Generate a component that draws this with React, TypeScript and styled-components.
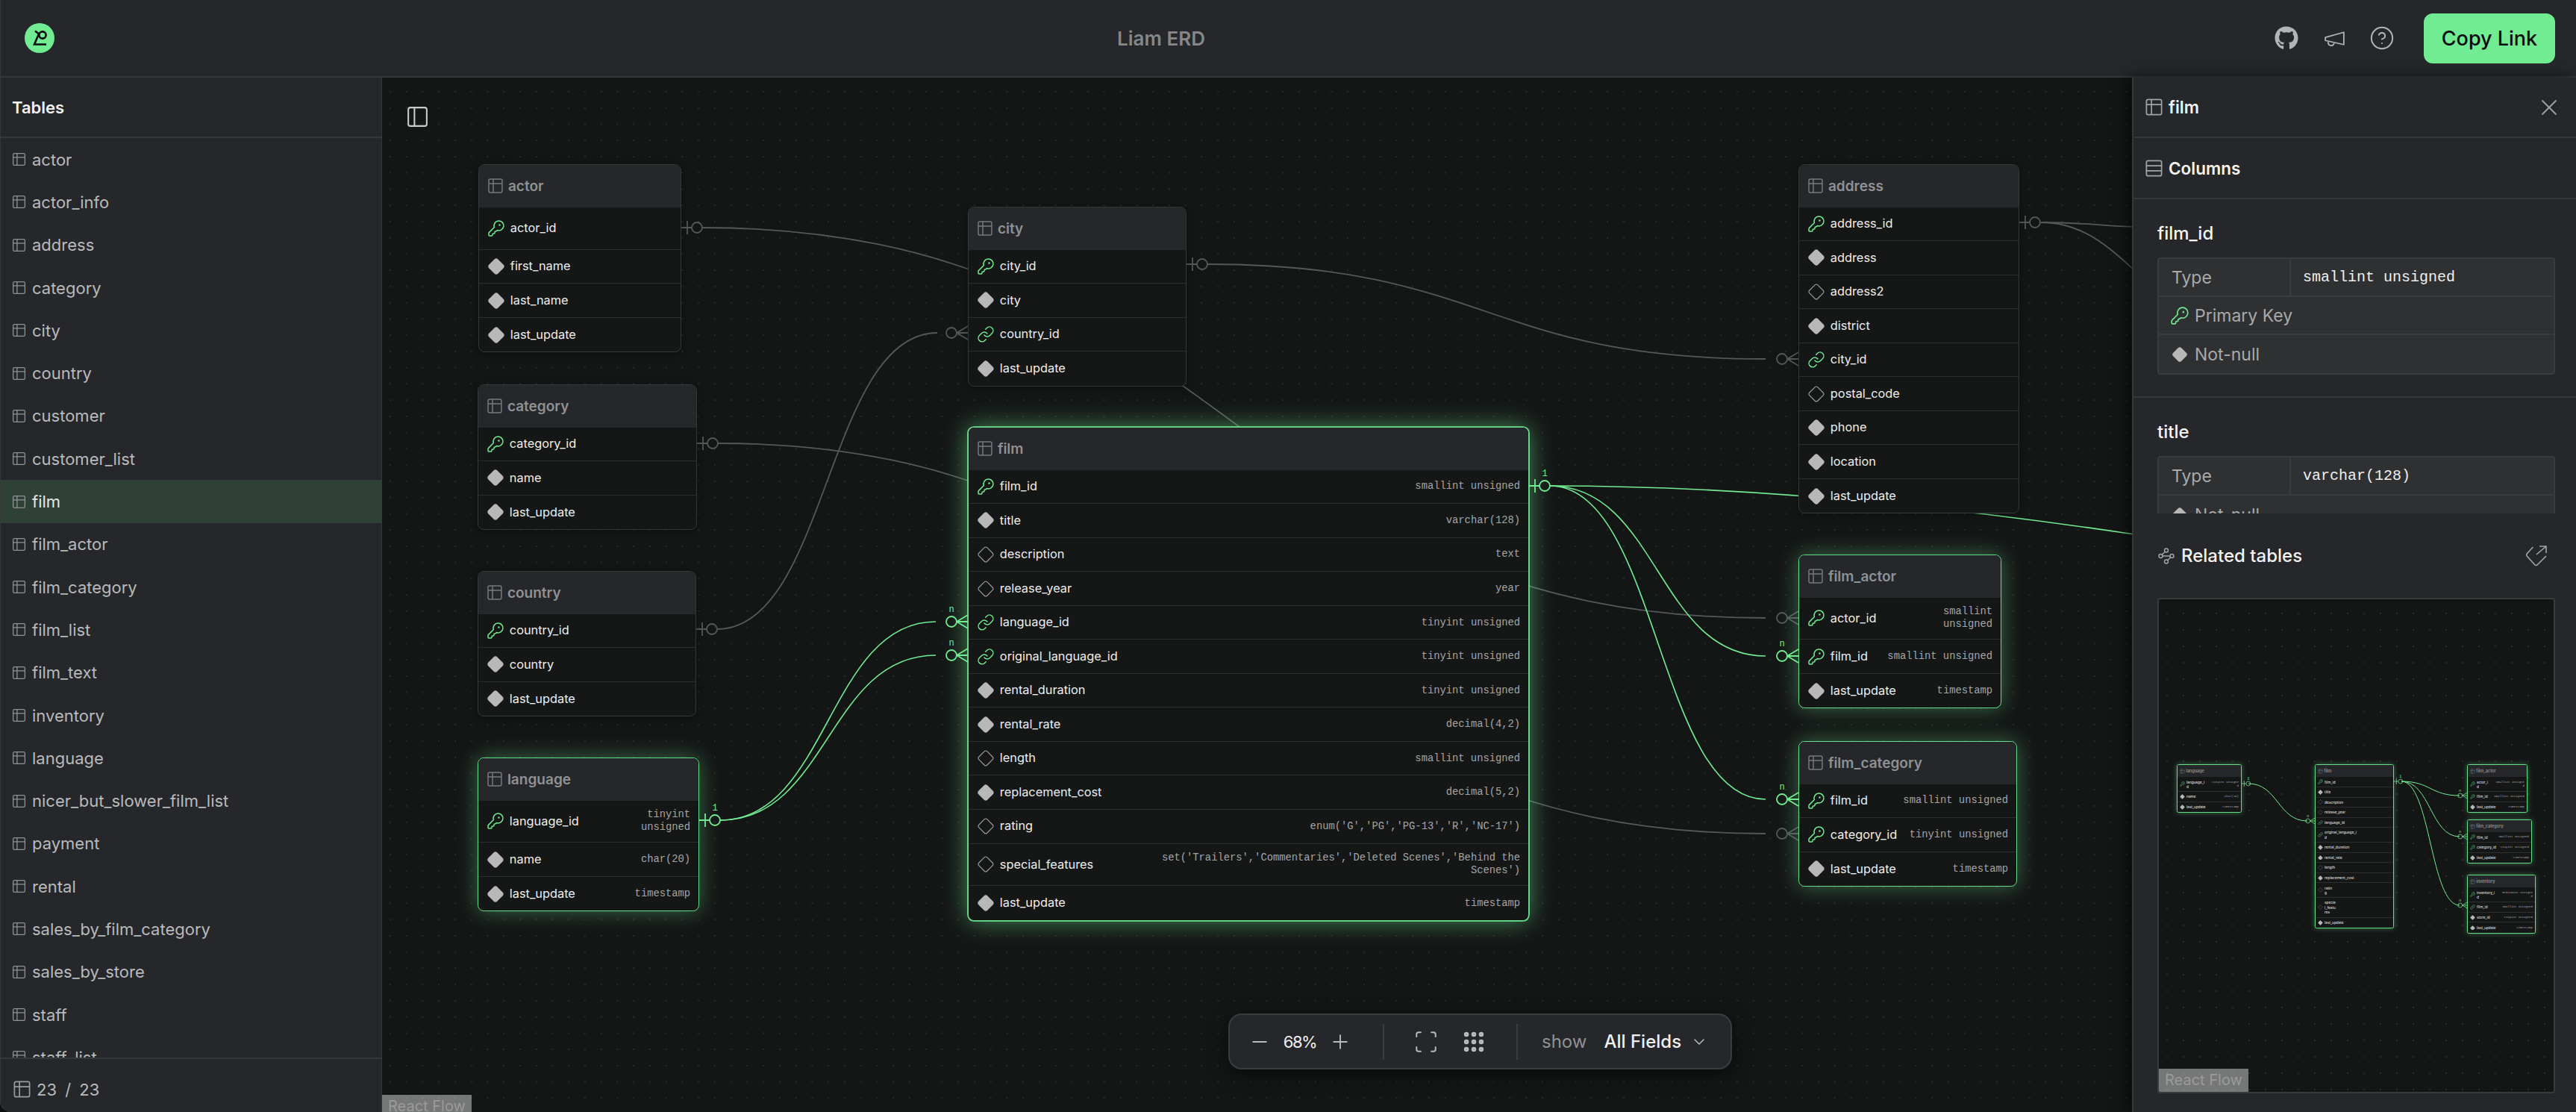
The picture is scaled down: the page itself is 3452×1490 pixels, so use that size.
import React from 'react';
import styled, { createGlobalStyle } from 'styled-components';
import {
  ChevronDown,
  CircleHelp,
  Diamond,
  Grip,
  KeyRound,
  Link as LinkIcon,
  Minus,
  PanelLeft,
  Plus,
  Rows3,
  Scan,
  Table2,
  Waypoints,
  X,
} from 'lucide-react';
import { FaGithub } from 'react-icons/fa';

const GREEN = '#72ec92';
const GREY_EDGE = '#55585a';
const SANS = "Inter, 'Liberation Sans', sans-serif";
const MONO = "'Liberation Mono', 'DejaVu Sans Mono', monospace";

const Global = createGlobalStyle`
  html, body {
    margin: 0;
    padding: 0;
    background: #0e0f0f;
  }
  * {
    box-sizing: border-box;
  }
`;

const Page = styled.div`
  width: 3452px;
  height: 1490px;
  display: flex;
  flex-direction: column;
  overflow: hidden;
  font-family: ${SANS};
  color: #e8e8e8;
`;

const TopBar = styled.header`
  height: 104px;
  flex: none;
  display: flex;
  align-items: center;
  justify-content: space-between;
  padding: 0 28px 0 32px;
  background: #25272a;
  border-bottom: 2px solid #36383a;
  border-left: 1px solid #36383a;
`;

const LogoMark = styled.svg`
  width: 40px;
  height: 40px;
`;

const AppTitle = styled.div`
  position: absolute;
  left: 0;
  right: 0;
  text-align: center;
  pointer-events: none;
  font-size: 26px;
  font-weight: 600;
  color: #85878a;
  padding-right: 340px;
`;

const TopActions = styled.div`
  display: flex;
  align-items: center;
  color: #b2b4b6;
`;

const TopIcon = styled.span<{ $w: number }>`
  width: ${(p) => p.$w}px;
  display: flex;
  justify-content: center;
`;

const CopyButton = styled.button`
  width: 176px;
  height: 67px;
  margin-left: 24px;
  border: 0;
  border-radius: 12px;
  background: ${GREEN};
  color: #0b0c0c;
  font-family: ${SANS};
  font-size: 27px;
  font-weight: 500;
`;

const Body = styled.div`
  flex: 1;
  min-height: 0;
  display: grid;
  grid-template-columns: 512px 1fr 595px;
`;

const Sidebar = styled.aside`
  display: flex;
  flex-direction: column;
  min-height: 0;
  background: #25272a;
  border-left: 1px solid #36383a;
  border-right: 1px solid #36383a;
  border-bottom-left-radius: 14px;
`;

const SidebarHead = styled.div`
  height: 81px;
  flex: none;
  display: flex;
  align-items: center;
  padding-left: 15px;
  font-size: 22px;
  font-weight: 600;
  color: #f2f2f2;
  border-bottom: 2px solid #36383a;
`;

const TableList = styled.ul`
  flex: 1;
  min-height: 0;
  margin: 0;
  padding: 0;
  list-style: none;
  overflow: hidden;
`;

const TableItem = styled.li<{ $on?: boolean }>`
  height: 57.3px;
  display: flex;
  align-items: center;
  gap: 7px;
  padding-left: 14px;
  font-size: 22px;
  color: ${(p) => (p.$on ? '#e4e6e6' : '#b8babc')};
  background: ${(p) => (p.$on ? '#2f4136' : 'transparent')};
  svg {
    color: #8f9193;
  }
`;

const SidebarFoot = styled.div`
  height: 73px;
  flex: none;
  display: flex;
  align-items: center;
  gap: 6px;
  padding: 10px 0 0 15px;
  border-top: 2px solid #36383a;
  font-size: 22px;
  color: #b8babc;
  word-spacing: 5px;
  svg {
    color: #9a9c9e;
  }
`;

const Canvas = styled.main`
  position: relative;
  min-width: 0;
  overflow: hidden;
  background-color: #141616;
  background-image: radial-gradient(circle, #2a2c2c 1px, transparent 1.2px);
  background-size: 21.76px 21.76px;
  background-position: 0 8px;
`;

const PanelToggle = styled.button`
  position: absolute;
  left: 31px;
  top: 36px;
  z-index: 3;
  padding: 0;
  border: 0;
  display: flex;
  background: transparent;
  color: #c9cbcd;
`;

const FlowPane = styled.div<{ $k: number }>`
  --k: ${(p) => p.$k};
  position: absolute;
  inset: 0;
`;

const EdgeLayer = styled.svg`
  position: absolute;
  left: 0;
  top: 0;
  width: 100%;
  height: 100%;
`;

const NodeCard = styled.div<{ $x: number; $y: number; $w: number; $tone: Tone }>`
  position: absolute;
  left: ${(p) => p.$x}px;
  top: ${(p) => p.$y}px;
  width: ${(p) => p.$w}px;
  background: #151717;
  border: calc(var(--k) * 1.47px) solid
    ${(p) => (p.$tone === 'idle' ? '#36383a' : '#66dd88')};
  border-radius: calc(var(--k) * 6px);
  overflow: hidden;
  box-shadow: ${(p) =>
    p.$tone === 'idle'
      ? '0 2px 8px rgba(0, 0, 0, 0.35)'
      : p.$tone === 'related'
      ? '0 0 calc(var(--k) * 20px) rgba(114, 236, 146, 0.4)'
      : `0 0 0 calc(var(--k) * 0.6px) ${GREEN}, 0 0 calc(var(--k) * 24px) rgba(114, 236, 146, 0.55)`};
`;

const NodeHead = styled.div`
  height: calc(var(--k) * 41.6px);
  display: flex;
  align-items: center;
  gap: calc(var(--k) * 4px);
  padding-left: calc(var(--k) * 7px);
  background: #25272a;
  color: #8f9193;
  font-size: calc(var(--k) * 14px);
  font-weight: 600;
  svg {
    width: calc(var(--k) * 17.6px);
    height: calc(var(--k) * 17.6px);
    color: #77797c;
    stroke-width: 1.5px;
  }
`;

const FieldRow = styled.div<{ $tall?: boolean }>`
  min-height: calc(var(--k) * ${(p) => (p.$tall ? 42 : 33.5)}px);
  padding: calc(var(--k) * 8px);
  display: flex;
  align-items: center;
  justify-content: space-between;
  gap: calc(var(--k) * 12px);
  border-bottom: 1px solid #2b2d2f;
  &:last-child {
    border-bottom: 0;
  }
`;

const FieldName = styled.div`
  display: flex;
  align-items: center;
  gap: calc(var(--k) * 5.2px);
  font-size: calc(var(--k) * 12px);
  line-height: calc(var(--k) * 16px);
  color: #eeeeee;
  white-space: pre;
  svg {
    flex: none;
    width: calc(var(--k) * 17.6px);
    height: calc(var(--k) * 17.6px);
    margin: calc(var(--k) * -1px) 0;
  }
`;

const FieldType = styled.div`
  font-family: ${MONO};
  font-size: calc(var(--k) * 10.15px);
  line-height: calc(var(--k) * 12.5px);
  color: #a3a5a7;
  text-align: right;
  white-space: pre;
`;

const Toolbar = styled.div`
  position: absolute;
  left: 1134px;
  bottom: 57px;
  height: 75px;
  z-index: 4;
  display: flex;
  align-items: center;
  padding: 0 30px 0 20px;
  background: #25272a;
  border: 2px solid #3a3c3e;
  border-radius: 18px;
  box-shadow: 0 6px 24px rgba(0, 0, 0, 0.55);
  color: #b9bbbd;
`;

const ToolButton = styled.span<{ $after?: number }>`
  width: 40px;
  display: flex;
  justify-content: center;
  margin-right: ${(p) => p.$after ?? 0}px;
`;

const ZoomValue = styled.span`
  width: 68px;
  text-align: center;
  font-size: 22px;
  letter-spacing: -1.5px;
  color: #eeeeee;
`;

const ToolDivider = styled.span<{ $after: number }>`
  width: 2px;
  height: 48px;
  margin: 0 ${(p) => p.$after}px 0 37px;
  background: #3a3c3e;
`;

const ShowLabel = styled.span`
  font-size: 24px;
  color: #8f9193;
  margin-right: 23px;
`;

const ShowValue = styled.span`
  font-size: 24px;
  font-weight: 500;
  color: #f0f0f0;
  margin-right: 12px;
`;

const Attribution = styled.div`
  position: absolute;
  left: 0;
  bottom: 0;
  z-index: 3;
  padding: 4px 8px;
  background: rgba(255, 255, 255, 0.42);
  color: #9a9b9b;
  font-size: 20px;
  line-height: 23px;
`;

const FlowAttribution = styled(Attribution)`
  bottom: -8px;
`;

const Drawer = styled.aside`
  position: relative;
  z-index: 5;
  display: flex;
  flex-direction: column;
  min-height: 0;
  background: #25272a;
  border-left: 2px solid #36383a;
  box-shadow: -6px 0 18px rgba(0, 0, 0, 0.6);
`;

const DrawerRow = styled.div<{ $h: number }>`
  height: ${(p) => p.$h}px;
  flex: none;
  display: flex;
  align-items: center;
  gap: 6px;
  padding: 0 18px 0 14px;
  border-bottom: 2px solid #36383a;
  font-size: 22.5px;
  font-weight: 600;
  color: #f2f2f2;
  svg {
    color: #a2a4a6;
  }
`;

const CloseIcon = styled.span`
  margin-left: auto;
  display: flex;
`;

const ColumnsScroll = styled.div`
  height: 421px;
  flex: none;
  overflow: hidden;
`;

const ColumnBlock = styled.section`
  height: 266px;
  padding: 31px 28px 0 32px;
  border-bottom: 2px solid #36383a;
`;

const ColumnTitle = styled.h3`
  margin: 0 0 17px 0;
  height: 30px;
  line-height: 30px;
  font-size: 24px;
  font-weight: 500;
  color: #f4f4f4;
`;

const PropTable = styled.div`
  border: 2px solid #393b3d;
  border-radius: 4px;
  background: #2e3032;
`;

const PropRow = styled.div`
  height: 51px;
  display: flex;
  align-items: center;
  gap: 7px;
  border-bottom: 2px solid #393b3d;
  font-size: 23px;
  color: #a8aaac;
  padding-left: 15px;
  &:last-child {
    border-bottom: 0;
  }
`;

const PropIcon = styled.span`
  width: 26px;
  display: flex;
  justify-content: center;
`;

const PropLabel = styled.div`
  width: 162px;
  height: 100%;
  display: flex;
  align-items: center;
  padding-left: 2px;
  border-right: 2px solid #393b3d;
  margin-right: 9px;
`;

const PropValue = styled.div`
  font-family: ${MONO};
  font-size: 20px;
  color: #eeeeee;
`;

const Related = styled.section`
  flex: 1;
  min-height: 0;
  display: flex;
  flex-direction: column;
  padding: 0 28px 25px 32px;
`;

const RelatedHead = styled.div`
  height: 113px;
  flex: none;
  display: flex;
  align-items: center;
  gap: 8px;
  font-size: 24px;
  font-weight: 500;
  color: #f2f2f2;
  svg {
    color: #a2a4a6;
  }
`;

const ExpandIcon = styled.svg`
  width: 28px;
  height: 28px;
  margin-left: auto;
  margin-right: 11px;
  color: #a2a4a6;
`;

const Preview = styled.div`
  flex: 1;
  position: relative;
  overflow: hidden;
  border: 2px solid #393b3d;
  border-radius: 4px;
  background-color: #141616;
  background-image: radial-gradient(circle, #2a2c2c 1px, transparent 1.2px);
  background-size: 22px 22px;
  background-position: 0 8px;
`;

type Tone = 'idle' | 'related' | 'selected';
type Kind = 'pk' | 'fk' | 'req' | 'opt';
type Field = { name: string; kind: Kind; type?: string; tall?: boolean };
type TableNode = {
  name: string;
  x: number;
  y: number;
  w: number;
  tone: Tone;
  fields: Field[];
};

const FieldIcon = ({ kind }: { kind: Kind }) => {
  if (kind === 'pk') return <KeyRound color={GREEN} strokeWidth={1.5} />;
  if (kind === 'fk') return <LinkIcon color={GREEN} strokeWidth={1.5} />;
  if (kind === 'req') return <Diamond color="#b8b8b8" fill="#b8b8b8" strokeWidth={1.5} />;
  return <Diamond color="#9a9a9a" strokeWidth={1.2} />;
};

const Node = ({ node, ox, oy }: { node: TableNode; ox: number; oy: number }) => (
  <NodeCard $x={node.x - ox} $y={node.y - oy} $w={node.w} $tone={node.tone}>
    <NodeHead>
      <Table2 />
      {node.name}
    </NodeHead>
    {node.fields.map((f) => (
      <FieldRow key={f.name} $tall={f.tall}>
        <FieldName>
          <FieldIcon kind={f.kind} />
          {f.name}
        </FieldName>
        {f.type && <FieldType>{f.type}</FieldType>}
      </FieldRow>
    ))}
  </NodeCard>
);

const curve = (x1: number, y1: number, x2: number, y2: number) => {
  const mx = (x1 + x2) / 2;
  return `M${x1} ${y1} C${mx} ${y1} ${mx} ${y2} ${x2} ${y2}`;
};

// "one" end of a relation: tick and ring right of the source table
const OneEnd = ({ x, y, on, s = 1 }: { x: number; y: number; on?: boolean; s?: number }) => {
  const c = on ? GREEN : GREY_EDGE;
  return (
    <g stroke={c} fill="none" strokeWidth={1.8 * s}>
      <path d={`M${x} ${y}H${x + 14 * s}M${x + 8 * s} ${y - 9 * s}V${y + 9 * s}`} />
      <circle cx={x + 21 * s} cy={y} r={7 * s} />
      {on && (
        <text x={x + 21 * s} y={y - 13 * s} fill={c} stroke="none" fontSize={12 * s} fontFamily={MONO} textAnchor="middle">
          1
        </text>
      )}
    </g>
  );
};

// "many" end: ring and crow's foot left of the target table
const ManyEnd = ({ x, y, on, s = 1 }: { x: number; y: number; on?: boolean; s?: number }) => {
  const c = on ? GREEN : GREY_EDGE;
  return (
    <g stroke={c} fill="none" strokeWidth={1.8 * s}>
      <circle cx={x - 22 * s} cy={y} r={7 * s} />
      <path d={`M${x - 15 * s} ${y}H${x}M${x - 15 * s} ${y}L${x} ${y - 9 * s}M${x - 15 * s} ${y}L${x} ${y + 9 * s}`} />
      {on && (
        <text x={x - 22 * s} y={y - 13 * s} fill={c} stroke="none" fontSize={12 * s} fontFamily={MONO} textAnchor="middle">
          n
        </text>
      )}
    </g>
  );
};

const tables: TableNode[] = [
  {
    name: 'actor', x: 641, y: 220, w: 272, tone: 'idle',
    fields: [
      { name: 'actor_id', kind: 'pk', tall: true },
      { name: 'first_name', kind: 'req' },
      { name: 'last_name', kind: 'req' },
      { name: 'last_update', kind: 'req' },
    ],
  },
  {
    name: 'category', x: 640, y: 515, w: 294, tone: 'idle',
    fields: [
      { name: 'category_id', kind: 'pk' },
      { name: 'name', kind: 'req' },
      { name: 'last_update', kind: 'req' },
    ],
  },
  {
    name: 'country', x: 640, y: 765, w: 293, tone: 'idle',
    fields: [
      { name: 'country_id', kind: 'pk' },
      { name: 'country', kind: 'req' },
      { name: 'last_update', kind: 'req' },
    ],
  },
  {
    name: 'language', x: 640, y: 1015, w: 297, tone: 'related',
    fields: [
      { name: 'language_id', kind: 'pk', type: 'tinyint\nunsigned' },
      { name: 'name', kind: 'req', type: 'char(20)' },
      { name: 'last_update', kind: 'req', type: 'timestamp' },
    ],
  },
  {
    name: 'city', x: 1297, y: 277, w: 293, tone: 'idle',
    fields: [
      { name: 'city_id', kind: 'pk' },
      { name: 'city', kind: 'req' },
      { name: 'country_id', kind: 'fk' },
      { name: 'last_update', kind: 'req' },
    ],
  },
  {
    name: 'film', x: 1297, y: 572, w: 752, tone: 'selected',
    fields: [
      { name: 'film_id', kind: 'pk', type: 'smallint unsigned' },
      { name: 'title', kind: 'req', type: 'varchar(128)' },
      { name: 'description', kind: 'opt', type: 'text' },
      { name: 'release_year', kind: 'opt', type: 'year' },
      { name: 'language_id', kind: 'fk', type: 'tinyint unsigned' },
      { name: 'original_language_id', kind: 'fk', type: 'tinyint unsigned' },
      { name: 'rental_duration', kind: 'req', type: 'tinyint unsigned' },
      { name: 'rental_rate', kind: 'req', type: 'decimal(4,2)' },
      { name: 'length', kind: 'opt', type: 'smallint unsigned' },
      { name: 'replacement_cost', kind: 'req', type: 'decimal(5,2)' },
      { name: 'rating', kind: 'opt', type: "enum('G','PG','PG-13','R','NC-17')" },
      {
        name: 'special_features',
        kind: 'opt',
        type: "set('Trailers','Commentaries','Deleted Scenes','Behind the\nScenes')",
      },
      { name: 'last_update', kind: 'req', type: 'timestamp' },
    ],
  },
  {
    name: 'address', x: 2410, y: 220, w: 296, tone: 'idle',
    fields: [
      { name: 'address_id', kind: 'pk' },
      { name: 'address', kind: 'req' },
      { name: 'address2', kind: 'opt' },
      { name: 'district', kind: 'req' },
      { name: 'city_id', kind: 'fk' },
      { name: 'postal_code', kind: 'opt' },
      { name: 'phone', kind: 'req' },
      { name: 'location', kind: 'req' },
      { name: 'last_update', kind: 'req' },
    ],
  },
  {
    name: 'film_actor', x: 2410, y: 743, w: 272, tone: 'related',
    fields: [
      { name: 'actor_id', kind: 'pk', type: 'smallint\nunsigned' },
      { name: 'film_id', kind: 'pk', type: 'smallint unsigned' },
      { name: 'last_update', kind: 'req', type: 'timestamp' },
    ],
  },
  {
    name: 'film_category', x: 2410, y: 993, w: 293, tone: 'related',
    fields: [
      { name: 'film_id', kind: 'pk', type: 'smallint unsigned' },
      { name: 'category_id', kind: 'pk', type: 'tinyint unsigned' },
      { name: 'last_update', kind: 'req', type: 'timestamp' },
    ],
  },
];

const previewTables: TableNode[] = [
  {
    name: 'language', x: 2917, y: 1024, w: 87, tone: 'related',
    fields: [
      { name: 'language_i\nd', kind: 'pk', type: 'tinyint unsigne\nd' },
      { name: 'name', kind: 'req', type: 'char(20)' },
      { name: 'last_update', kind: 'req', type: 'timestamp' },
    ],
  },
  {
    name: 'film', x: 3102, y: 1024, w: 106, tone: 'related',
    fields: [
      { name: 'film_id', kind: 'pk' },
      { name: 'title', kind: 'req' },
      { name: 'description', kind: 'opt' },
      { name: 'release_year', kind: 'opt' },
      { name: 'language_id', kind: 'fk' },
      { name: 'original_language_i\nd', kind: 'fk' },
      { name: 'rental_duration', kind: 'req' },
      { name: 'rental_rate', kind: 'req' },
      { name: 'length', kind: 'opt' },
      { name: 'replacement_cost', kind: 'req' },
      { name: 'ratin\ng', kind: 'opt' },
      { name: 'specia\nl_featu\nres', kind: 'opt' },
      { name: 'last_update', kind: 'req' },
    ],
  },
  {
    name: 'film_actor', x: 3306, y: 1024, w: 81, tone: 'related',
    fields: [
      { name: 'actor_i\nd', kind: 'pk', type: 'smallint unsigne\nd' },
      { name: 'film_id', kind: 'pk', type: 'smallint unsigned' },
      { name: 'last_update', kind: 'req', type: 'timestamp' },
    ],
  },
  {
    name: 'film_category', x: 3306, y: 1098, w: 87, tone: 'related',
    fields: [
      { name: 'film_id', kind: 'pk', type: 'smallint unsigned' },
      { name: 'category_id', kind: 'pk', type: 'tinyint unsigned' },
      { name: 'last_update', kind: 'req', type: 'timestamp' },
    ],
  },
  {
    name: 'inventory', x: 3306, y: 1172, w: 92, tone: 'related',
    fields: [
      { name: 'inventory_i\nd', kind: 'pk', type: 'mediumint unsigne\nd' },
      { name: 'film_id', kind: 'fk', type: 'smallint unsigned' },
      { name: 'store_id', kind: 'req', type: 'tinyint unsigned' },
      { name: 'last_update', kind: 'req', type: 'timestamp' },
    ],
  },
];

const sidebarNames = [
  'actor', 'actor_info', 'address', 'category', 'city', 'country', 'customer',
  'customer_list', 'film', 'film_actor', 'film_category', 'film_list', 'film_text',
  'inventory', 'language', 'nicer_but_slower_film_list', 'payment', 'rental',
  'sales_by_film_category', 'sales_by_store', 'staff', 'staff_list',
];

const MainFlow = () => (
  <FlowPane $k={1.36}>
    <EdgeLayer viewBox="512 104 2345 1386">
      <g fill="none" stroke={GREY_EDGE} strokeWidth={1.8}>
        <path d={curve(941, 305, 2366, 828)} />
        <path d={curve(962, 594, 2366, 1117)} />
        <path d={curve(961, 843, 1256, 446)} />
        <path d={curve(1617, 354, 2366, 481)} />
        <path d="M2735 298 C2790 298 2810 302 2860 304" />
        <path d="M2735 298 C2790 298 2825 330 2860 362" />
      </g>
      <g fill="none" stroke={GREEN} strokeWidth={1.6}>
        <path d={curve(965, 1099, 1254, 833)} />
        <path d={curve(965, 1099, 1254, 878)} />
        <path d={curve(2077, 651, 2366, 879)} />
        <path d={curve(2077, 651, 2366, 1071)} />
        <path d="M2077 651 C2250 651 2500 662 2860 716" />
      </g>
      <OneEnd x={913} y={305} />
      <OneEnd x={934} y={594} />
      <OneEnd x={933} y={843} />
      <OneEnd x={1590} y={354} />
      <OneEnd x={2706} y={298} />
      <ManyEnd x={1297} y={446} />
      <ManyEnd x={2410} y={481} />
      <ManyEnd x={2410} y={828} />
      <ManyEnd x={2410} y={1117} />
      <OneEnd x={937} y={1099} on />
      <OneEnd x={2049} y={651} on />
      <ManyEnd x={1297} y={833} on />
      <ManyEnd x={1297} y={878} on />
      <ManyEnd x={2410} y={879} on />
      <ManyEnd x={2410} y={1071} on />
    </EdgeLayer>
    {tables.map((t) => (
      <Node key={t.name} node={t} ox={512} oy={104} />
    ))}
  </FlowPane>
);

const RelatedFlow = () => (
  <FlowPane $k={0.394}>
    <EdgeLayer viewBox="2893 803 529 660">
      <g fill="none" stroke={GREEN} strokeWidth={1}>
        <path d={curve(3013, 1050, 3092, 1100)} />
        <path d={curve(3218, 1047, 3296, 1066)} />
        <path d={curve(3218, 1047, 3296, 1121)} />
        <path d={curve(3218, 1047, 3296, 1213)} />
      </g>
      <OneEnd x={3004} y={1050} on s={0.42} />
      <OneEnd x={3208} y={1047} on s={0.42} />
      <ManyEnd x={3102} y={1100} on s={0.42} />
      <ManyEnd x={3306} y={1066} on s={0.42} />
      <ManyEnd x={3306} y={1121} on s={0.42} />
      <ManyEnd x={3306} y={1213} on s={0.42} />
    </EdgeLayer>
    {previewTables.map((t) => (
      <Node key={t.name} node={t} ox={2893} oy={803} />
    ))}
  </FlowPane>
);

export default function App() {
  return (
    <Page>
      <Global />
      <TopBar>
        <LogoMark viewBox="0 0 40 40">
          <circle cx="20" cy="20" r="20" fill={GREEN} />
          <g fill="none" stroke="#0b0c0c" strokeWidth="2.6">
            <path d="M14 10.5 L19 14.5 L13 28.5 H29" />
            <circle cx="24" cy="16" r="4.6" />
          </g>
        </LogoMark>
        <AppTitle>Liam ERD</AppTitle>
        <TopActions>
          <TopIcon $w={64}>
            <FaGithub size={32} />
          </TopIcon>
          <TopIcon $w={64}>
            <svg width="33" height="33" viewBox="0 0 24 24" fill="none" stroke="currentColor" strokeWidth="1.3" strokeLinejoin="round">
              <path d="m3 11 18-5v12L3 14v-3z" />
              <path d="M11.6 16.8a3 3 0 1 1-5.8-1.6" />
            </svg>
          </TopIcon>
          <TopIcon $w={64}>
            <CircleHelp size={34} strokeWidth={1.4} />
          </TopIcon>
          <CopyButton>Copy Link</CopyButton>
        </TopActions>
      </TopBar>
      <Body>
        <Sidebar>
          <SidebarHead>Tables</SidebarHead>
          <TableList>
            {sidebarNames.map((name) => (
              <TableItem key={name} $on={name === 'film'}>
                <Table2 size={21} strokeWidth={1.5} />
                {name}
              </TableItem>
            ))}
          </TableList>
          <SidebarFoot>
            <Table2 size={27} strokeWidth={1.5} />
            23 / 23
          </SidebarFoot>
        </Sidebar>
        <Canvas>
          <PanelToggle aria-label="Toggle sidebar">
            <PanelLeft size={33} strokeWidth={1.5} />
          </PanelToggle>
          <MainFlow />
          <Toolbar>
            <ToolButton>
              <Minus size={30} strokeWidth={1.5} />
            </ToolButton>
            <ZoomValue>68%</ZoomValue>
            <ToolButton>
              <Plus size={30} strokeWidth={1.5} />
            </ToolButton>
            <ToolDivider $after={36} />
            <ToolButton $after={24}>
              <Scan size={34} strokeWidth={1.4} />
            </ToolButton>
            <ToolButton>
              <Grip size={34} strokeWidth={2.6} />
            </ToolButton>
            <ToolDivider $after={32} />
            <ShowLabel>show</ShowLabel>
            <ShowValue>All Fields</ShowValue>
            <ChevronDown size={24} strokeWidth={1.5} />
          </Toolbar>
          <FlowAttribution>React Flow</FlowAttribution>
        </Canvas>
        <Drawer>
          <DrawerRow $h={81}>
            <Table2 size={27} strokeWidth={1.5} />
            film
            <CloseIcon>
              <X size={36} strokeWidth={1.2} />
            </CloseIcon>
          </DrawerRow>
          <DrawerRow $h={82}>
            <Rows3 size={27} strokeWidth={1.5} />
            Columns
          </DrawerRow>
          <ColumnsScroll>
            <ColumnBlock>
              <ColumnTitle>film_id</ColumnTitle>
              <PropTable>
                <PropRow>
                  <PropLabel>Type</PropLabel>
                  <PropValue>smallint unsigned</PropValue>
                </PropRow>
                <PropRow>
                  <PropIcon>
                    <KeyRound size={26} color={GREEN} strokeWidth={1.5} />
                  </PropIcon>
                  Primary Key
                </PropRow>
                <PropRow>
                  <PropIcon>
                    <Diamond size={22} color="#b8b8b8" fill="#b8b8b8" strokeWidth={1.5} />
                  </PropIcon>
                  Not-null
                </PropRow>
              </PropTable>
            </ColumnBlock>
            <ColumnBlock>
              <ColumnTitle>title</ColumnTitle>
              <PropTable>
                <PropRow>
                  <PropLabel>Type</PropLabel>
                  <PropValue>varchar(128)</PropValue>
                </PropRow>
                <PropRow>
                  <PropIcon>
                    <Diamond size={22} color="#b8b8b8" fill="#b8b8b8" strokeWidth={1.5} />
                  </PropIcon>
                  Not-null
                </PropRow>
              </PropTable>
            </ColumnBlock>
          </ColumnsScroll>
          <Related>
            <RelatedHead>
              <Waypoints size={24} strokeWidth={1.4} />
              Related tables
              <ExpandIcon viewBox="0 0 28 28" fill="none" stroke="currentColor" strokeWidth="1.6">
                <path d="M9.4 2 L1.2 11 Q0.2 12.5 1.2 14 L11.5 25.5 Q13.5 27.5 15.5 25.5 L27 14" />
                <path d="M14 12 L27 1 M18 1 H27 V10" />
              </ExpandIcon>
            </RelatedHead>
            <Preview>
              <RelatedFlow />
              <Attribution>React Flow</Attribution>
            </Preview>
          </Related>
        </Drawer>
      </Body>
    </Page>
  );
}
